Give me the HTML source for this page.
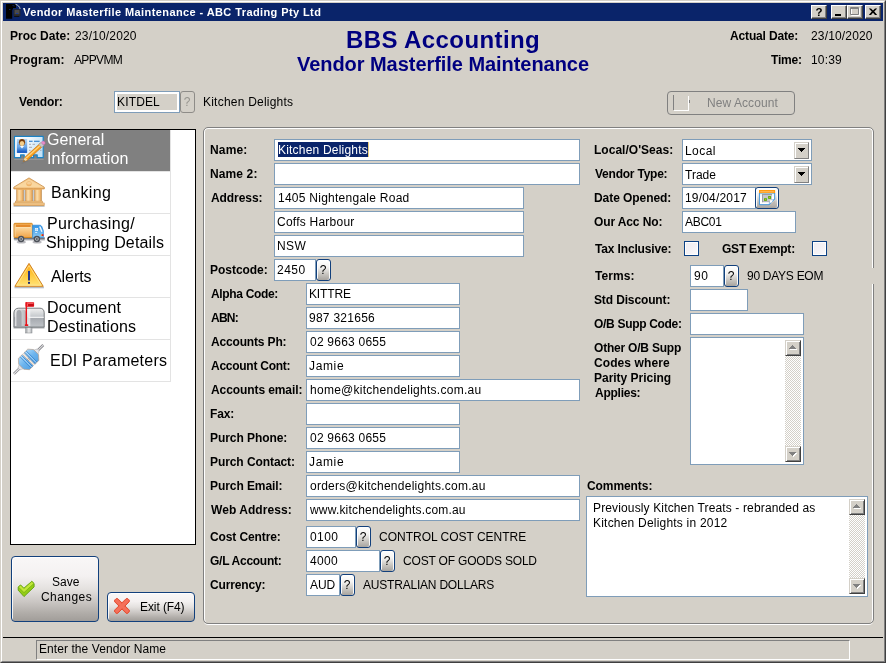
<!DOCTYPE html>
<html><head><meta charset="utf-8"><title>Vendor Masterfile Maintenance</title>
<style>
html,body{margin:0;padding:0;}
body{width:886px;height:663px;background:#d4d0c8;position:relative;overflow:hidden;font-family:"Liberation Sans",sans-serif;font-size:12px;color:#000;}
.a{position:absolute;}
.t{position:absolute;white-space:nowrap;will-change:transform;}
.b{font-weight:bold;}
.in{position:absolute;background:#fff;border:1px solid #7f9db9;box-sizing:content-box;}
.qb{position:absolute;border:1px solid #12407c;border-radius:3px;background:linear-gradient(#ffffff 0%,#f4f3f1 35%,#c9c6c1 70%,#a8a49f 100%);text-align:center;font-size:12px;line-height:20px;color:#000;will-change:transform;text-indent:-1px;box-shadow:inset 1px 1px 0 rgba(255,255,255,.9),inset -1px 0 0 rgba(255,255,255,.9);}
.qb.dis{border-color:#8e8c88;background:#d4d0c8;color:#97958f;box-shadow:none;}
.cb{position:absolute;width:13px;height:13px;border:1px solid #0c4184;background:linear-gradient(135deg,#eeecf0 0%,#f3f1f5 50%,#fbfafc 100%);box-shadow:inset 0 0 0 1px #fff;}
.sb{position:absolute;width:16px;background-color:#fff;background-image:linear-gradient(45deg,#d4d0c8 25%,transparent 25%,transparent 75%,#d4d0c8 75%),linear-gradient(45deg,#d4d0c8 25%,transparent 25%,transparent 75%,#d4d0c8 75%);background-size:2px 2px;background-position:0 0,1px 1px;}
.sbb{position:absolute;left:0;width:16px;height:16px;background:#d4d0c8;box-sizing:border-box;border:1px solid;border-color:#d4d0c8 #404040 #404040 #d4d0c8;box-shadow:inset 1px 1px 0 #fff,inset -1px -1px 0 #808080;}
.li{position:absolute;left:11px;width:159px;height:41px;border-right:1px solid #e3e3e3;border-bottom:1px solid #e3e3e3;}
.li.sel{background:#808080;}
.pb{position:absolute;border:1px solid #12407c;border-radius:4px;background:linear-gradient(#f9f7f7 0%,#f4f1f1 30%,#e4e1df 50%,#cac6c3 70%,#b0aca8 88%,#a19d99 100%);box-sizing:border-box;box-shadow:inset 1px 1px 0 rgba(255,255,255,.85);}
.cbtn{position:absolute;top:5px;width:16px;height:14px;background:#d4d0c8;box-sizing:border-box;border:1px solid;border-color:#fff #404040 #404040 #fff;box-shadow:inset -1px -1px 0 #808080;}
</style></head><body>

<div class="a" style="left:0;top:0;width:886px;height:663px;box-sizing:border-box;border:1px solid;border-color:#d4d0c8 #404040 #404040 #d4d0c8;"></div>
<div class="a" style="left:1px;top:1px;width:884px;height:661px;box-sizing:border-box;border:1px solid;border-color:#fff #808080 #808080 #fff;"></div>
<div class="a" style="left:3px;top:3px;width:880px;height:18px;background:#0a246a;"></div>
<div id="t1" class="t b" style="left:23.00px;top:5.69px;font-size:11px;line-height:13px;letter-spacing:0.404px;color:#fff;">Vendor Masterfile Maintenance - ABC Trading Pty Ltd</div>
<svg class="a" style="left:4px;top:3px" width="18" height="18" viewBox="4 3 18 18">
<path d="M6 4h6.5l3.5 0.3v3.7h-3v1.5h-0.8v9.2H6z" fill="#000"/>
<path d="M15.5 4.3c2.6 0.8 4.2 2.4 4.6 4.6" stroke="#d8d8d8" stroke-width="0.9" fill="none"/>
<path d="M12.5 5.5l2 0.5M9 9.5h1.5" stroke="#0a2a7a" stroke-width="0.8"/>
<rect x="13.6" y="9.2" width="6.8" height="7" fill="#2a2a2a"/>
<rect x="14.6" y="10" width="4.8" height="4.2" fill="#4a4a4a"/>
<rect x="16" y="13" width="2.2" height="1" fill="#1a3a9a"/>
<rect x="14.2" y="16" width="5" height="1" fill="#111"/>
</svg>
<div class="cbtn" style="left:811px;"></div>
<div class="cbtn" style="left:831px;"></div>
<div class="cbtn" style="left:847px;"></div>
<div class="cbtn" style="left:865px;"></div>
<svg class="a" style="left:808px;top:3px;will-change:transform" width="76" height="18" viewBox="808 3 76 18">
<text x="815.6" y="16" font-family="Liberation Sans, sans-serif" font-weight="bold" font-size="11.5" fill="#000">?</text>
<rect x="835" y="14" width="6" height="2" fill="#000"/>
<path d="M851.5 8.5h8v7h-8z" fill="none" stroke="#fff" stroke-width="1"/>
<path d="M850.5 7.5h8v7h-8z M850.5 8.5h8" fill="none" stroke="#808080" stroke-width="1"/>
<path d="M869 8.5h2l2 2 2-2h2v0.3L874.2 11.6 877 14.7v0.3h-2l-2-2.2-2 2.2h-2v-0.3l2.8-3.1L869 8.8z" fill="#000"/>
</svg>
<div id="t2" class="t b" style="left:10.00px;top:28.84px;font-size:12px;line-height:14px;letter-spacing:0.017px;">Proc Date:</div>
<div id="t3" class="t " style="left:75.00px;top:28.84px;font-size:12px;line-height:14px;letter-spacing:0.165px;">23/10/2020</div>
<div id="t4" class="t b" style="left:10.00px;top:52.84px;font-size:12px;line-height:14px;letter-spacing:0.178px;">Program:</div>
<div id="t5" class="t " style="left:74.00px;top:52.84px;font-size:12px;line-height:14px;letter-spacing:-0.634px;">APPVMM</div>
<div id="t6" class="t b" style="left:730.00px;top:28.84px;font-size:12px;line-height:14px;letter-spacing:-0.151px;">Actual Date:</div>
<div id="t7" class="t " style="left:811.00px;top:28.84px;font-size:12px;line-height:14px;letter-spacing:0.165px;">23/10/2020</div>
<div id="t8" class="t b" style="left:771.00px;top:52.84px;font-size:12px;line-height:14px;letter-spacing:-0.179px;">Time:</div>
<div id="t9" class="t " style="left:811.00px;top:52.84px;font-size:12px;line-height:14px;letter-spacing:0.176px;">10:39</div>
<div id="t10" class="t b" style="left:346.00px;top:25.98px;font-size:24px;line-height:28px;letter-spacing:0.405px;color:#000080;">BBS Accounting</div>
<div id="t11" class="t b" style="left:297.00px;top:52.57px;font-size:20px;line-height:22px;letter-spacing:-0.049px;color:#000080;">Vendor Masterfile Maintenance</div>
<div id="t12" class="t b" style="left:19.00px;top:95.04px;font-size:12px;line-height:14px;letter-spacing:-0.161px;">Vendor:</div>
<div class="in " style="left:114px;top:91px;width:64px;height:20px;background:#d4d0c8;box-shadow:inset 0 0 0 2px #fff;"></div>
<div id="t13" class="t " style="left:117.00px;top:95.04px;font-size:12px;line-height:14px;letter-spacing:0.154px;">KITDEL</div>
<div class="qb dis" style="left:180px;top:91px;width:13px;height:20px;">?</div>
<div id="t14" class="t " style="left:203.00px;top:95.04px;font-size:12px;line-height:14px;letter-spacing:0.221px;">Kitchen Delights</div>
<div class="a" style="left:667px;top:91px;width:128px;height:24px;box-sizing:border-box;border:1px solid #808080;border-radius:4px;"></div>
<div id="t15" class="t " style="left:707.00px;top:95.84px;font-size:12px;line-height:14px;letter-spacing:0.068px;color:#808080;">New Account</div>
<div class="a" style="left:673px;top:95px;width:1px;height:15px;background:#808080;"></div>
<div class="a" style="left:674px;top:110px;width:15px;height:1px;background:#fff;"></div>
<div class="a" style="left:688px;top:96px;width:1px;height:14px;background:#fff;"></div>
<div class="a" style="left:689px;top:100px;width:1px;height:3px;background:#808080;"></div>
<div class="a" style="left:10px;top:129px;width:186px;height:416px;box-sizing:border-box;border:1px solid #000;background:#fff;"></div>
<div class="li sel" style="top:130px;"></div>
<svg class="a" style="left:13px;top:134px" width="33" height="36" viewBox="0 0 33 36"><defs><linearGradient id="g_c0" x1="0" y1="0" x2="1" y2="0.3"><stop offset="0" stop-color="#ffffff"/><stop offset="0.45" stop-color="#f4fafe"/><stop offset="1" stop-color="#c4e2f6"/></linearGradient>
<linearGradient id="g_c1" x1="0" y1="0" x2="0" y2="1"><stop offset="0" stop-color="#b8dcf8"/><stop offset="1" stop-color="#2a74d4"/></linearGradient>
<linearGradient id="g_c2" x1="0" y1="0" x2="0" y2="1"><stop offset="0" stop-color="#7ab8f0"/><stop offset="1" stop-color="#0c50c0"/></linearGradient></defs>
<rect x="1.2" y="24.6" width="29.4" height="1.4" fill="#a4a4a6" opacity="0.55"/>
<path d="M1.5 2.4h28.7v21.3h-6v-2.8h-3.6v2.8h-9.4v-2.8H7.6v2.8H1.5z" fill="url(#g_c0)" stroke="#1a82c6" stroke-width="1.2" stroke-linejoin="round"/>
<rect x="3.8" y="4.9" width="10.4" height="13.9" fill="url(#g_c1)"/>
<path d="M4.2 18.7v-4.4c0-1.7 1.2-2.5 2.6-2.5h4.4c1.4 0 2.6 0.8 2.6 2.5v4.4z" fill="url(#g_c2)"/>
<path d="M6.9 12l2.1 2.6 2.1-2.6z" fill="#f4f8ff"/>
<ellipse cx="9" cy="8.3" rx="3.1" ry="3.4" fill="#8a4a12"/>
<ellipse cx="9" cy="9.6" rx="2.2" ry="2.5" fill="#f3cf8c"/>
<path d="M6.2 7.4c1.6-2.4 4-2.4 5.6 0c-1.8-0.9-3.8-0.9-5.6 0z" fill="#70380c"/>
<path d="M16 7.3h3.6M21 7.3h5.6" stroke="#1a72c8" stroke-width="1.1"/>
<path d="M16 10.3h2M19.5 10.3h2.5M16 13.3h3M16 16.3h1.5M27 16.3h1.5" stroke="#a8a8b0" stroke-width="1"/>
<path d="M10.3 27.6l1.5-4.3L27.3 9.2l2.7 2.9L14.6 26z" fill="#f59c1a" stroke="#c46a08" stroke-width="0.6"/>
<path d="M12.6 23.4L27.9 9.9l0.9 1L13.6 24.6z" fill="#ffd27a"/>
<path d="M10.3 27.6l1.5-4.3 2.8 2.7z" fill="#f0d8a8"/>
<path d="M10.3 27.6l0.6-1.7 1.1 1.1z" fill="#303030"/>
<path d="M25.9 10.4l2.2-2 2.9 3-2.2 2z" fill="#c8c8cc" stroke="#8a8a90" stroke-width="0.4"/>
<path d="M28 8.5l1.3-1.1c0.8-0.6 1.6-0.4 2.3 0.3 0.7 0.8 0.9 1.6 0.2 2.3l-1.2 1.1z" fill="#e88cc8" stroke="#c060a0" stroke-width="0.4"/>
<path d="M8.5 29l5.5-2.6 1.5 0.6-6.5 3z" fill="#707070" opacity="0.45"/>
</svg>
<div id="t16" class="t " style="left:47.00px;top:131.46px;font-size:16px;line-height:18px;letter-spacing:0.052px;color:#fff;">General</div>
<div id="t17" class="t " style="left:47.00px;top:150.06px;font-size:16px;line-height:18px;letter-spacing:0.145px;color:#fff;">Information</div>
<div class="li" style="top:172px;"></div>
<svg class="a" style="left:13px;top:176px" width="33" height="36" viewBox="0 0 33 36"><defs><linearGradient id="g_b0" x1="0" y1="0" x2="0" y2="1"><stop offset="0" stop-color="#f3bd78"/><stop offset="0.8" stop-color="#f8d49c"/><stop offset="1" stop-color="#eeb066"/></linearGradient>
<linearGradient id="g_b1" x1="0" y1="0" x2="1" y2="0"><stop offset="0" stop-color="#e8a85c"/><stop offset="0.35" stop-color="#fbdfae"/><stop offset="0.7" stop-color="#f4c27e"/><stop offset="1" stop-color="#dd9a4e"/></linearGradient>
<linearGradient id="g_b2" x1="0" y1="0" x2="0" y2="1"><stop offset="0" stop-color="#fbe0b0"/><stop offset="1" stop-color="#eaa85a"/></linearGradient></defs>
<rect x="0.6" y="29.4" width="31" height="1.6" fill="#a8b0b8" opacity="0.7"/>
<rect x="3.4" y="13" width="25.4" height="12.4" fill="#c4ccd4"/>
<path d="M16 1.9L31.3 11.2v1.7H0.8v-1.7z" fill="url(#g_b0)" stroke="#c88c44" stroke-width="0.8" stroke-linejoin="round"/>
<path d="M16 3.3L28.5 10.8H3.5z" fill="#f9d9a4" opacity="0.75"/>
<ellipse cx="16" cy="7.8" rx="2.7" ry="2.5" fill="#efb46a"/>
<ellipse cx="16" cy="7.2" rx="2" ry="1.4" fill="#f7cf98"/>
<rect x="3.7" y="12.9" width="6.7" height="12.5" fill="url(#g_b1)" stroke="#c88c44" stroke-width="0.5"/>
<rect x="12.6" y="12.9" width="6.9" height="12.5" fill="url(#g_b1)" stroke="#c88c44" stroke-width="0.5"/>
<rect x="21.7" y="12.9" width="6.7" height="12.5" fill="url(#g_b1)" stroke="#c88c44" stroke-width="0.5"/>
<rect x="3" y="12.6" width="26" height="1.3" fill="#e9ad62"/>
<rect x="2.4" y="25.1" width="27.2" height="2" fill="#f6cc90" stroke="#c88c44" stroke-width="0.5"/>
<rect x="0.9" y="27" width="30.3" height="2.5" fill="url(#g_b2)" stroke="#c88c44" stroke-width="0.6"/>
</svg>
<div id="t18" class="t " style="left:51.00px;top:184.06px;font-size:16px;line-height:18px;letter-spacing:0.338px;">Banking</div>
<div class="li" style="top:214px;"></div>
<svg class="a" style="left:13px;top:218px" width="33" height="36" viewBox="0 0 33 36"><defs><linearGradient id="g_t0" x1="0" y1="0" x2="0" y2="1"><stop offset="0" stop-color="#f0a040"/><stop offset="0.35" stop-color="#fbd498"/><stop offset="1" stop-color="#f0a448"/></linearGradient>
<linearGradient id="g_t1" x1="0" y1="0" x2="0" y2="1"><stop offset="0" stop-color="#2f92e6"/><stop offset="1" stop-color="#8ccaf4"/></linearGradient></defs>
<ellipse cx="8.3" cy="24" rx="4.6" ry="1.6" fill="#808088" opacity="0.55"/><ellipse cx="24.1" cy="24" rx="4.6" ry="1.6" fill="#808088" opacity="0.55"/><rect x="1.2" y="21.4" width="30.6" height="1.2" fill="#9a9aa0" opacity="0.6"/>
<rect x="0.8" y="19.3" width="31" height="2.2" fill="#70747c"/>
<rect x="1" y="5.3" width="18.3" height="14.2" rx="0.8" fill="url(#g_t0)" stroke="#d48418" stroke-width="0.9"/>
<rect x="2.6" y="6.8" width="15.2" height="2.3" fill="#e48a2c"/>
<rect x="2.6" y="9.1" width="15.2" height="0.9" fill="#fde2b0"/>
<path d="M2.2 6.6v12M18.2 6.6v12" stroke="#fbd9a0" stroke-width="0.7"/>
<path d="M19.6 7.2h6.8c1.2 0 1.9 0.4 2.4 1.4l1.6 4.2v6.6H19.6z" fill="url(#g_t1)" stroke="#2a86d8" stroke-width="0.7"/>
<rect x="22.1" y="10" width="2.9" height="2.9" fill="#f4faff"/>
<path d="M23.55 10v2.9M22.1 11.45h2.9" stroke="#8cc4f0" stroke-width="0.4"/>
<path d="M26 8.6l1.6 0 1.9 5-1.2 0.4z" fill="#f0f8ff"/>
<rect x="22.2" y="14.2" width="2" height="0.8" fill="#f4faff"/>
<rect x="28.8" y="16.2" width="1.7" height="1.8" fill="#e81c1c"/>
<rect x="27.9" y="16.2" width="0.9" height="1.8" fill="#f8a020"/>
<circle cx="8.1" cy="21" r="3.2" fill="#4c5058"/><circle cx="8.1" cy="21" r="1.8" fill="#c4c8cc"/><circle cx="8.1" cy="21" r="0.9" fill="#484c54"/>
<circle cx="23.9" cy="21" r="3.2" fill="#4c5058"/><circle cx="23.9" cy="21" r="1.8" fill="#c4c8cc"/><circle cx="23.9" cy="21" r="0.9" fill="#484c54"/>
</svg>
<div id="t19" class="t " style="left:47.00px;top:215.46px;font-size:16px;line-height:18px;letter-spacing:0.311px;">Purchasing/</div>
<div id="t20" class="t " style="left:46.00px;top:234.06px;font-size:16px;line-height:18px;letter-spacing:0.158px;">Shipping Details</div>
<div class="li" style="top:256px;"></div>
<svg class="a" style="left:13px;top:260px" width="33" height="36" viewBox="0 0 33 36"><defs><linearGradient id="g_a0" x1="0" y1="0" x2="0" y2="1"><stop offset="0" stop-color="#ffa814"/><stop offset="0.5" stop-color="#ffc83c"/><stop offset="1" stop-color="#ffe478"/></linearGradient></defs>
<rect x="1.5" y="26.6" width="29.4" height="1.7" fill="#98a0a8" opacity="0.7"/>
<path d="M16 3.4L30.2 26.3H1.9z" fill="url(#g_a0)" stroke="#d2801c" stroke-width="1" stroke-linejoin="round"/>
<path d="M16 5.6L28.2 25.2H3.9z" fill="none" stroke="#ffe9a0" stroke-width="0.7" stroke-linejoin="round"/>
<rect x="15" y="10.9" width="2" height="9.6" fill="#24388c"/>
<rect x="15" y="21.9" width="2" height="1.9" fill="#1c2c78"/>
</svg>
<div id="t21" class="t " style="left:51.00px;top:268.06px;font-size:16px;line-height:18px;letter-spacing:-0.061px;">Alerts</div>
<div class="li" style="top:298px;"></div>
<svg class="a" style="left:13px;top:302px" width="33" height="36" viewBox="0 0 33 36"><defs><linearGradient id="g_m0" x1="0" y1="0" x2="0" y2="1"><stop offset="0" stop-color="#f2f2f2"/><stop offset="0.45" stop-color="#c4c8cc"/><stop offset="0.5" stop-color="#a4a8ae"/><stop offset="1" stop-color="#c0c4c8"/></linearGradient>
<linearGradient id="g_m1" x1="0" y1="0" x2="1" y2="0"><stop offset="0" stop-color="#e8e8ea"/><stop offset="1" stop-color="#b4b8bc"/></linearGradient>
<linearGradient id="g_m2" x1="0" y1="0" x2="1" y2="0"><stop offset="0" stop-color="#9a9ea2"/><stop offset="0.5" stop-color="#ececec"/><stop offset="1" stop-color="#a8acb0"/></linearGradient></defs>
<rect x="0.5" y="25" width="31" height="1.6" fill="#888c90" opacity="0.6"/>
<rect x="12.7" y="25" width="6.3" height="6" fill="url(#g_m2)" stroke="#808488" stroke-width="0.5"/>
<path d="M0.9 25.1V11c0-3 2-4.8 4.8-4.8H27c2.6 0 4.2 1.8 4.2 4.6v14.3z" fill="url(#g_m0)" stroke="#6c7074" stroke-width="0.9"/>
<path d="M2.2 24V11.2c0-2.4 1.4-3.8 3.4-3.8h4.2c2 0 3.4 1.4 3.4 3.8V24z" fill="url(#g_m1)"/>
<path d="M3.4 24V12c0-2.6 0.9-4 2.6-4s2.6 1.4 2.6 4V24z" fill="#9ca0a6" opacity="0.85"/>
<path d="M15.4 15.3h15.4" stroke="#ffffff" stroke-width="1"/>
<rect x="12.5" y="0.2" width="8.6" height="4.5" rx="0.6" fill="#e8141c"/>
<path d="M14.4 1.6h6M14.4 1.6v2.4" stroke="#ff8c8c" stroke-width="0.7" fill="none"/>
<rect x="15.2" y="1.9" width="5.3" height="2.3" fill="#c80c14"/>
<rect x="12.6" y="0.2" width="1.5" height="23.2" fill="#e8141c"/><rect x="14.1" y="7" width="3.2" height="17" fill="#f4f6f8" opacity="0.7"/>
<rect x="11.9" y="22.3" width="3.3" height="1.7" fill="#e8141c"/>
</svg>
<div id="t22" class="t " style="left:47.00px;top:299.46px;font-size:16px;line-height:18px;letter-spacing:0.137px;">Document</div>
<div id="t23" class="t " style="left:47.00px;top:318.06px;font-size:16px;line-height:18px;letter-spacing:0.077px;">Destinations</div>
<div class="li" style="top:340px;"></div>
<svg class="a" style="left:13px;top:344px" width="33" height="36" viewBox="0 0 33 36"><defs><linearGradient id="g_e0" x1="0" y1="0" x2="0" y2="1"><stop offset="0" stop-color="#a4d4f8"/><stop offset="0.5" stop-color="#6cb4ee"/><stop offset="1" stop-color="#58a4e4"/></linearGradient></defs>
<g transform="translate(15.6,15.4) rotate(-44.5)">
<rect x="-20.6" y="-1.3" width="41.2" height="2.6" fill="#88888c"/>
<rect x="-20.6" y="-0.45" width="41.2" height="0.9" fill="#f0f0f4"/>
<path d="M-13.6 -1.3L-10.3 -3V3L-13.6 1.3z" fill="#e4e4e8" stroke="#9a9a9e" stroke-width="0.4"/>
<path d="M13.6 -1.3L10.3 -3V3L13.6 1.3z" fill="#e4e4e8" stroke="#9a9a9e" stroke-width="0.4"/>
<path d="M-10.4 -3.6L-6.6 -7.9H-0.9V7.9H-6.6L-10.4 3.6z" fill="url(#g_e0)" stroke="#b89a84" stroke-width="0.6"/>
<path d="M10.4 -3.6L6.6 -7.9H0.9V7.9H6.6L10.4 3.6z" fill="url(#g_e0)" stroke="#b89a84" stroke-width="0.6"/>
<path d="M-4.2 -7.6V7.6M-2.2 -7.6V7.6M4.2 -7.6V7.6M2.2 -7.6V7.6" stroke="#2e7cc8" stroke-width="0.7"/>
<path d="M-3.2 -7.6V7.6M3.2 -7.6V7.6" stroke="#c8e6fc" stroke-width="0.7"/>
<path d="M0 -7.4V7.4" stroke="#efe4d8" stroke-width="0.9"/>
</g>
</svg>
<div id="t24" class="t " style="left:50.00px;top:352.06px;font-size:16px;line-height:18px;letter-spacing:0.246px;">EDI Parameters</div>
<div class="a" style="left:203px;top:127px;width:671px;height:498px;box-sizing:border-box;border:1px solid #fff;border-radius:5px;border-left-color:transparent;border-top-color:transparent;border-right-color:transparent;"></div>
<div class="a" style="left:204px;top:128px;width:669px;height:495px;box-sizing:border-box;border:1px solid #fff;border-radius:4px;border-bottom-color:transparent;"></div>
<div class="a" style="left:203px;top:127px;width:671px;height:497px;box-sizing:border-box;border:1px solid #808080;border-radius:5px;"></div>
<div class="a" style="left:870px;top:268px;width:6px;height:16px;background:#d4d0c8;"></div>
<div id="t25" class="t b" style="left:210.00px;top:142.84px;font-size:12px;line-height:14px;letter-spacing:0.171px;">Name:</div>
<div class="in " style="left:274px;top:139px;width:304px;height:20px;"></div>
<div id="t26" class="t b" style="left:210.00px;top:166.84px;font-size:12px;line-height:14px;letter-spacing:0.114px;">Name 2:</div>
<div class="in " style="left:274px;top:163px;width:304px;height:20px;"></div>
<div id="t27" class="t b" style="left:211.00px;top:190.84px;font-size:12px;line-height:14px;letter-spacing:-0.073px;">Address:</div>
<div class="in " style="left:274px;top:187px;width:248px;height:20px;"></div>
<div id="t28" class="t " style="left:278.00px;top:190.84px;font-size:12px;line-height:14px;letter-spacing:0.258px;">1405 Nightengale Road</div>
<div class="in " style="left:274px;top:211px;width:248px;height:20px;"></div>
<div id="t29" class="t " style="left:277.00px;top:214.84px;font-size:12px;line-height:14px;letter-spacing:0.234px;">Coffs Harbour</div>
<div class="in " style="left:274px;top:235px;width:248px;height:20px;"></div>
<div id="t30" class="t " style="left:277.00px;top:238.84px;font-size:12px;line-height:14px;letter-spacing:0.399px;">NSW</div>
<div id="t31" class="t b" style="left:210.00px;top:262.84px;font-size:12px;line-height:14px;letter-spacing:-0.032px;">Postcode:</div>
<div class="in " style="left:274px;top:259px;width:40px;height:20px;"></div>
<div id="t32" class="t " style="left:277.00px;top:262.84px;font-size:12px;line-height:14px;letter-spacing:0.465px;">2450</div>
<div id="t33" class="t b" style="left:211.00px;top:286.84px;font-size:12px;line-height:14px;letter-spacing:-0.331px;">Alpha Code:</div>
<div class="in " style="left:306px;top:283px;width:152px;height:20px;"></div>
<div id="t34" class="t " style="left:309.00px;top:286.84px;font-size:12px;line-height:14px;letter-spacing:-0.133px;">KITTRE</div>
<div id="t35" class="t b" style="left:211.00px;top:310.84px;font-size:12px;line-height:14px;letter-spacing:-0.771px;">ABN:</div>
<div class="in " style="left:306px;top:307px;width:152px;height:20px;"></div>
<div id="t36" class="t " style="left:309.00px;top:310.84px;font-size:12px;line-height:14px;letter-spacing:0.262px;">987 321656</div>
<div id="t37" class="t b" style="left:211.00px;top:334.84px;font-size:12px;line-height:14px;letter-spacing:-0.161px;">Accounts Ph:</div>
<div class="in " style="left:306px;top:331px;width:152px;height:20px;"></div>
<div id="t38" class="t " style="left:310.00px;top:334.84px;font-size:12px;line-height:14px;letter-spacing:0.227px;">02 9663 0655</div>
<div id="t39" class="t b" style="left:211.00px;top:358.84px;font-size:12px;line-height:14px;letter-spacing:-0.263px;">Account Cont:</div>
<div class="in " style="left:306px;top:355px;width:152px;height:20px;"></div>
<div id="t40" class="t " style="left:309.00px;top:358.84px;font-size:12px;line-height:14px;letter-spacing:0.636px;">Jamie</div>
<div id="t41" class="t b" style="left:211.00px;top:382.84px;font-size:12px;line-height:14px;letter-spacing:-0.089px;">Accounts email:</div>
<div class="in " style="left:306px;top:379px;width:272px;height:20px;"></div>
<div id="t42" class="t " style="left:310.00px;top:382.84px;font-size:12px;line-height:14px;letter-spacing:0.264px;">home@kitchendelights.com.au</div>
<div id="t43" class="t b" style="left:210.00px;top:406.84px;font-size:12px;line-height:14px;letter-spacing:-0.168px;">Fax:</div>
<div class="in " style="left:306px;top:403px;width:152px;height:20px;"></div>
<div id="t44" class="t b" style="left:210.00px;top:430.84px;font-size:12px;line-height:14px;letter-spacing:-0.060px;">Purch Phone:</div>
<div class="in " style="left:306px;top:427px;width:152px;height:20px;"></div>
<div id="t45" class="t " style="left:310.00px;top:430.84px;font-size:12px;line-height:14px;letter-spacing:0.227px;">02 9663 0655</div>
<div id="t46" class="t b" style="left:210.00px;top:454.84px;font-size:12px;line-height:14px;letter-spacing:-0.076px;">Purch Contact:</div>
<div class="in " style="left:306px;top:451px;width:152px;height:20px;"></div>
<div id="t47" class="t " style="left:309.00px;top:454.84px;font-size:12px;line-height:14px;letter-spacing:0.636px;">Jamie</div>
<div id="t48" class="t b" style="left:210.00px;top:478.84px;font-size:12px;line-height:14px;letter-spacing:-0.071px;">Purch Email:</div>
<div class="in " style="left:306px;top:475px;width:272px;height:20px;"></div>
<div id="t49" class="t " style="left:310.00px;top:478.84px;font-size:12px;line-height:14px;letter-spacing:0.256px;">orders@kitchendelights.com.au</div>
<div id="t50" class="t b" style="left:211.00px;top:502.84px;font-size:12px;line-height:14px;letter-spacing:0.057px;">Web Address:</div>
<div class="in " style="left:306px;top:499px;width:272px;height:20px;"></div>
<div id="t51" class="t " style="left:310.00px;top:502.84px;font-size:12px;line-height:14px;letter-spacing:0.190px;">www.kitchendelights.com.au</div>
<div id="t52" class="t b" style="left:210.00px;top:529.84px;font-size:12px;line-height:14px;letter-spacing:-0.111px;">Cost Centre:</div>
<div class="in " style="left:306px;top:526px;width:48px;height:20px;"></div>
<div id="t53" class="t " style="left:310.00px;top:529.84px;font-size:12px;line-height:14px;letter-spacing:0.399px;">0100</div>
<div id="t54" class="t b" style="left:210.00px;top:553.84px;font-size:12px;line-height:14px;letter-spacing:-0.271px;">G/L Account:</div>
<div class="in " style="left:306px;top:550px;width:72px;height:20px;"></div>
<div id="t55" class="t " style="left:310.00px;top:553.84px;font-size:12px;line-height:14px;letter-spacing:0.352px;">4000</div>
<div id="t56" class="t b" style="left:210.00px;top:577.84px;font-size:12px;line-height:14px;letter-spacing:-0.138px;">Currency:</div>
<div class="in " style="left:306px;top:574px;width:32px;height:20px;"></div>
<div id="t57" class="t " style="left:310.00px;top:577.84px;font-size:12px;line-height:14px;letter-spacing:-0.066px;">AUD</div>
<div class="a" style="left:278px;top:142px;width:90px;height:15px;background:#0a246a;"></div>
<div id="t58" class="t " style="left:278.00px;top:142.84px;font-size:12px;line-height:14px;letter-spacing:0.200px;color:#fff;">Kitchen Delights</div>
<div class="a" style="left:367.5px;top:142px;width:1px;height:15px;background:#e6c25a;opacity:.8"></div>
<div class="qb" style="left:316px;top:259px;width:13px;height:20px;">?</div>
<div class="qb" style="left:356px;top:526px;width:13px;height:20px;">?</div>
<div class="qb" style="left:380px;top:550px;width:13px;height:20px;">?</div>
<div class="qb" style="left:340px;top:574px;width:13px;height:20px;">?</div>
<div id="t59" class="t " style="left:379.00px;top:529.84px;font-size:12px;line-height:14px;letter-spacing:-0.007px;">CONTROL COST CENTRE</div>
<div id="t60" class="t " style="left:403.00px;top:553.84px;font-size:12px;line-height:14px;letter-spacing:-0.182px;">COST OF GOODS SOLD</div>
<div id="t61" class="t " style="left:363.00px;top:577.84px;font-size:12px;line-height:14px;letter-spacing:-0.208px;">AUSTRALIAN DOLLARS</div>
<div id="t62" class="t b" style="left:594.00px;top:142.84px;font-size:12px;line-height:14px;letter-spacing:0.022px;">Local/O&#39;Seas:</div>
<div class="in " style="left:682px;top:139px;width:128px;height:20px;"></div>
<div class="a" style="left:794px;top:142px;width:15px;height:17px;background:#d4d0c8;box-sizing:border-box;border:1px solid;border-color:#d4d0c8 #808080 #808080 #d4d0c8;box-shadow:inset 1px 1px 0 #fff;"></div>
<svg class="a" style="left:798px;top:148px" width="7" height="4" viewBox="0 0 7 4"><path d="M0 0h7v1H6v1H5v1H4v1H3V3H2V2H1V1H0z" fill="#000" shape-rendering="crispEdges"/></svg>
<div id="t63" class="t " style="left:685.00px;top:144.24px;font-size:12px;line-height:14px;letter-spacing:0.446px;">Local</div>
<div id="t64" class="t b" style="left:595.00px;top:166.84px;font-size:12px;line-height:14px;letter-spacing:-0.228px;">Vendor Type:</div>
<div class="in " style="left:682px;top:163px;width:128px;height:20px;"></div>
<div class="a" style="left:794px;top:166px;width:15px;height:17px;background:#d4d0c8;box-sizing:border-box;border:1px solid;border-color:#d4d0c8 #808080 #808080 #d4d0c8;box-shadow:inset 1px 1px 0 #fff;"></div>
<svg class="a" style="left:798px;top:172px" width="7" height="4" viewBox="0 0 7 4"><path d="M0 0h7v1H6v1H5v1H4v1H3V3H2V2H1V1H0z" fill="#000" shape-rendering="crispEdges"/></svg>
<div id="t65" class="t " style="left:685.00px;top:168.24px;font-size:12px;line-height:14px;letter-spacing:0.001px;">Trade</div>
<div id="t66" class="t b" style="left:594.00px;top:190.84px;font-size:12px;line-height:14px;letter-spacing:-0.060px;">Date Opened:</div>
<div class="in " style="left:682px;top:187px;width:72px;height:20px;"></div>
<div id="t67" class="t " style="left:685.00px;top:190.84px;font-size:12px;line-height:14px;letter-spacing:0.190px;">19/04/2017</div>
<div class="qb" style="left:755px;top:187px;width:22px;height:20px;"></div>
<svg class="a" style="left:757px;top:188px" width="21" height="20" viewBox="757 188 21 20">
<path d="M759.4 193h15.3v6.2l-5.6 5.5h-9.7z" fill="url(#g_k0)" stroke="#2c8ad6" stroke-width="0.9"/>
<path d="M769.2 204.6l0.4-4.2 4.9-1z" fill="#e8f4fc" stroke="#2c8ad6" stroke-width="0.5"/>
<path d="M771 204.5h4v-4z" fill="#b8b4b0" opacity="0.7"/>
<rect x="759" y="190" width="16.1" height="3.1" fill="#ff9a12"/>
<rect x="760.2" y="191.5" width="13.7" height="0.7" fill="#ffcf8a"/>
<rect x="762" y="194" width="10" height="8.2" fill="#b4b4bc"/>
<rect x="762" y="194" width="10" height="1" fill="#9c9ca4"/><rect x="762" y="194" width="1" height="8.2" fill="#9c9ca4"/>
<path d="M763.5 196h8.5M763.5 198h8.5M763.5 200h8.5" stroke="#fff" stroke-width="1" stroke-dasharray="1 1"/>
<path d="M770 200.2h2.2v2.2h-2.2z" fill="#fff"/>
<rect x="764" y="198.2" width="2.9" height="2.7" fill="#62ac0c"/><rect x="765" y="199.1" width="0.9" height="0.9" fill="#a8d830"/>
<rect x="768.1" y="196" width="2.9" height="2.9" fill="#62ac0c"/><rect x="769.1" y="197" width="0.9" height="0.9" fill="#a8d830"/>
<defs><linearGradient id="g_k0" x1="0" y1="0" x2="0" y2="1"><stop offset="0" stop-color="#d8f4fc"/><stop offset="0.4" stop-color="#ffffff"/><stop offset="1" stop-color="#ffffff"/></linearGradient></defs>
</svg>
<div id="t68" class="t b" style="left:594.00px;top:214.84px;font-size:12px;line-height:14px;letter-spacing:-0.117px;">Our Acc No:</div>
<div class="in " style="left:682px;top:211px;width:112px;height:20px;"></div>
<div id="t69" class="t " style="left:685.00px;top:214.84px;font-size:12px;line-height:14px;letter-spacing:-0.277px;">ABC01</div>
<div id="t70" class="t b" style="left:595.00px;top:241.84px;font-size:12px;line-height:14px;letter-spacing:-0.147px;">Tax Inclusive:</div>
<div class="cb" style="left:684px;top:241px;"></div>
<div id="t71" class="t b" style="left:722.00px;top:241.84px;font-size:12px;line-height:14px;letter-spacing:-0.222px;">GST Exempt:</div>
<div class="cb" style="left:812px;top:241px;"></div>
<div id="t72" class="t b" style="left:595.00px;top:268.84px;font-size:12px;line-height:14px;letter-spacing:0.092px;">Terms:</div>
<div class="in " style="left:690px;top:265px;width:32px;height:20px;"></div>
<div id="t73" class="t " style="left:694.00px;top:268.84px;font-size:12px;line-height:14px;letter-spacing:0.471px;">90</div>
<div class="qb" style="left:724px;top:265px;width:13px;height:20px;">?</div>
<div id="t74" class="t " style="left:747.00px;top:268.84px;font-size:12px;line-height:14px;letter-spacing:-0.271px;">90 DAYS EOM</div>
<div id="t75" class="t b" style="left:594.00px;top:292.84px;font-size:12px;line-height:14px;letter-spacing:-0.134px;">Std Discount:</div>
<div class="in " style="left:690px;top:289px;width:56px;height:20px;"></div>
<div id="t76" class="t b" style="left:594.00px;top:316.84px;font-size:12px;line-height:14px;letter-spacing:-0.309px;">O/B Supp Code:</div>
<div class="in " style="left:690px;top:313px;width:112px;height:20px;"></div>
<div id="t77" class="t b" style="left:594.00px;top:341.04px;font-size:12px;line-height:14px;letter-spacing:-0.206px;">Other O/B Supp</div>
<div id="t78" class="t b" style="left:594.00px;top:355.84px;font-size:12px;line-height:14px;letter-spacing:0.090px;">Codes where</div>
<div id="t79" class="t b" style="left:594.00px;top:370.84px;font-size:12px;line-height:14px;letter-spacing:-0.019px;">Parity Pricing</div>
<div id="t80" class="t b" style="left:595.00px;top:385.64px;font-size:12px;line-height:14px;letter-spacing:-0.252px;">Applies:</div>
<div class="in " style="left:690px;top:337px;width:112px;height:126px;"></div>
<div class="sb" style="left:785px;top:340px;height:122px;"><div class="sbb" style="top:0"></div><div class="sbb" style="bottom:0"></div>
<svg class="a" style="left:4px;top:5px" width="8" height="5" viewBox="0 0 8 5" shape-rendering="crispEdges"><path d="M4 1h1v1h1v1h1v1h1v1H1V4h1V3h1V2h1z" fill="#fff"/><path d="M3 0h1v1h1v1h1v1h1v1H0V3h1V2h1V1h1z" fill="#808080"/></svg>
<svg class="a" style="left:4px;bottom:5px" width="8" height="5" viewBox="0 0 8 5" shape-rendering="crispEdges"><path d="M1 1h7v1H7v1H6v1H5v1H4V4H3V3H2V2H1z" fill="#fff"/><path d="M0 0h7v1H6v1H5v1H4v1H3V3H2V2H1V1H0z" fill="#808080"/></svg>
</div>
<div id="t81" class="t b" style="left:587.00px;top:478.84px;font-size:12px;line-height:14px;letter-spacing:-0.078px;">Comments:</div>
<div class="in " style="left:586px;top:496px;width:280px;height:99px;"></div>
<div id="t82" class="t " style="left:593.00px;top:500.84px;font-size:12px;line-height:14px;letter-spacing:0.140px;">Previously Kitchen Treats - rebranded as</div>
<div id="t83" class="t " style="left:593.00px;top:515.84px;font-size:12px;line-height:14px;letter-spacing:0.208px;">Kitchen Delights in 2012</div>
<div class="sb" style="left:849px;top:499px;height:95px;"><div class="sbb" style="top:0"></div><div class="sbb" style="bottom:0"></div>
<svg class="a" style="left:4px;top:5px" width="8" height="5" viewBox="0 0 8 5" shape-rendering="crispEdges"><path d="M4 1h1v1h1v1h1v1h1v1H1V4h1V3h1V2h1z" fill="#fff"/><path d="M3 0h1v1h1v1h1v1h1v1H0V3h1V2h1V1h1z" fill="#808080"/></svg>
<svg class="a" style="left:4px;bottom:5px" width="8" height="5" viewBox="0 0 8 5" shape-rendering="crispEdges"><path d="M1 1h7v1H7v1H6v1H5v1H4V4H3V3H2V2H1z" fill="#fff"/><path d="M0 0h7v1H6v1H5v1H4v1H3V3H2V2H1V1H0z" fill="#808080"/></svg>
</div>
<div class="pb" style="left:11px;top:556px;width:88px;height:66px;"></div>
<div id="t84" class="t " style="left:52.00px;top:574.84px;font-size:12px;line-height:14px;letter-spacing:-0.014px;">Save</div>
<div id="t85" class="t " style="left:41.00px;top:589.84px;font-size:12px;line-height:14px;letter-spacing:0.432px;">Changes</div>
<svg class="a" style="left:16px;top:579px" width="20" height="20" viewBox="16 579 20 20">
<path d="M18.2 590.2v-3.2l2.4-2 3.3 3.3 7.9-7 2.3 2.2v3.4L24 596.6z" fill="#94cc14" stroke="#5e9e10" stroke-width="0.9" stroke-linejoin="round"/>
<path d="M18.4 587l2.2-1.8 3.3 3.3 7.9-7 2.1 2L24 592.6z" fill="#c2e63a" stroke="#6aa812" stroke-width="0.6" stroke-linejoin="round"/>
</svg>
<div class="pb" style="left:107px;top:592px;width:88px;height:30px;"></div>
<div id="t86" class="t " style="left:140.00px;top:600.24px;font-size:12px;line-height:14px;letter-spacing:-0.090px;">Exit (F4)</div>
<svg class="a" style="left:113px;top:597px" width="19" height="18" viewBox="113 597 19 18">
<g transform="translate(121.95,605.95)" fill="#f2644c" stroke="#e2482c" stroke-width="0.9">
<rect x="-9.3" y="-2.2" width="18.6" height="4.4" rx="1.6" transform="rotate(45)"/>
<rect x="-9.3" y="-2.2" width="18.6" height="4.4" rx="1.6" transform="rotate(-45)"/>
</g>
<g transform="translate(121.95,605.95)" fill="#f4705a">
<rect x="-8.6" y="-1.5" width="17.2" height="3" rx="1.2" transform="rotate(45)"/>
<rect x="-8.6" y="-1.5" width="17.2" height="3" rx="1.2" transform="rotate(-45)"/>
</g>
</svg>
<div class="a" style="left:3px;top:637px;width:880px;height:1px;background:#000;"></div>
<div class="a" style="left:36px;top:640px;width:814px;height:20px;box-sizing:border-box;border:1px solid;border-color:#808080 #fff #fff #808080;"></div>
<div id="t87" class="t " style="left:39.00px;top:642.34px;font-size:12px;line-height:14px;letter-spacing:0.073px;">Enter the Vendor Name</div>
</body></html>
